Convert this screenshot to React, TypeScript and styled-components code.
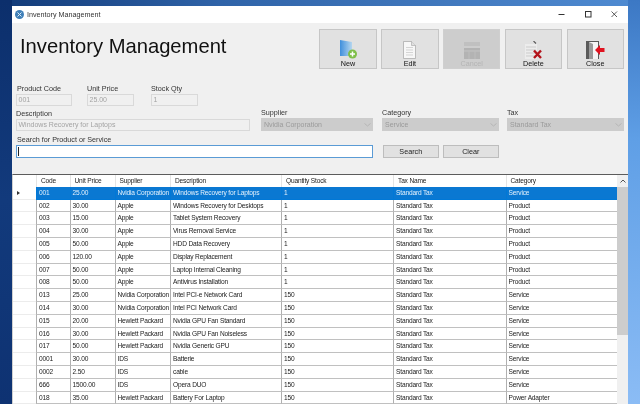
import React from "react";
import styled, { createGlobalStyle } from "styled-components";

const Global = createGlobalStyle`
  html, body { margin: 0; padding: 0; width: 640px; height: 404px; overflow: hidden; }
  body { font-family: "Liberation Sans", Arial, sans-serif; color: #1a1a1a; }
`;

const Desktop = styled.div`
  width: 640px; height: 404px; overflow: hidden; padding: 6px 12px 0; box-sizing: border-box;
  background:
    linear-gradient(180deg, #0c2f6c 0, #123a7c 200px, #0e3272 404px) 0 0 / 12px 100% no-repeat,
    linear-gradient(180deg, #3c78c4 0, #5f9fe6 140px, #8bbcf5 404px) 100% 0 / 12px 100% no-repeat,
    linear-gradient(90deg, #123a78 0, #2f63a8 220px, #3f76bb 420px, #4f8bd2 640px);
  filter: blur(0.42px);
`;
const Win = styled.div`
  height: 398px; background: #f0f0f0; display: flex; flex-direction: column; overflow: hidden;
`;
const TitleBar = styled.div`
  height: 17px; flex: none; background: #fff; display: flex; align-items: center; padding: 0 0 0 3px;
  font-size: 7.2px; color: #333;
`;
const TitleText = styled.span` margin-left: 3px; flex: 1; `;
const WinCtl = styled.div`
  width: 26.5px; height: 17px; display: flex; align-items: center; justify-content: center;
`;
const Form = styled.div`
  height: 151px; flex: none; padding: 6px 4px 0 4px; box-sizing: border-box; display: flex; flex-direction: column;
`;
const Head = styled.div` display: flex; align-items: flex-start; justify-content: space-between; height: 40px; `;
const Heading = styled.h1`
  margin: 4px 0 0 4px; font-size: 20.2px; font-weight: 400; color: #111; line-height: 26px; white-space: nowrap;
`;
const Tools = styled.div` display: flex; gap: 4.3px; `;
const ToolBtn = styled.div<{ $off?: boolean }>`
  width: 57.5px; height: 40px; box-sizing: border-box; border: 1px solid ${p => p.$off ? "#cfcfcf" : "#c6c6c6"};
  background: ${p => p.$off ? "#cdcdcd" : "#e1e1e1"}; display: flex; flex-direction: column; align-items: center;
  justify-content: flex-end; padding-bottom: 0; font-size: 7.2px; line-height: 9px; color: ${p => p.$off ? "#b4b4b4" : "#111"};
`;
const Row = styled.div<{ $mt: number }>` display: flex; margin-top: ${p => p.$mt}px; align-items: flex-end; `;
const Field = styled.div<{ $w: number; $ml?: number }>`
  width: ${p => p.$w}px; margin-left: ${p => p.$ml ?? 0}px; flex: none; display: flex; flex-direction: column;
`;
const Label = styled.label<{ $in?: number }>`
  font-size: 7.2px; line-height: 9px; color: #333; padding-left: ${p => p.$in ?? 0}px; margin-bottom: 1px; white-space: nowrap;
`;
const Input = styled.div<{ $h?: number }>`
  height: ${p => p.$h ?? 12}px; box-sizing: border-box; border: 1px solid #d9d9d9; background: #f0f0f0; color: #a3a3a3;
  font-size: 7px; line-height: 10px; padding-left: 1.5px; white-space: nowrap; overflow: hidden;
`;
const Select = styled.div`
  height: 13px; box-sizing: border-box; background: #cccccc; color: #9a9a9a; font-size: 7px; line-height: 13px;
  padding: 0 2px 0 3px; display: flex; justify-content: space-between; align-items: center; white-space: nowrap;
`;
const SearchBox = styled.div`
  height: 12.5px; box-sizing: border-box; border: 1px solid #5a9bd5; background: #fff; position: relative;
  &::after { content: ""; position: absolute; left: 1px; top: 1px; width: 1px; height: 8.5px; background: #222; }
`;
const PushBtn = styled.div<{ $ml: number }>`
  width: 55.5px; height: 13px; margin-left: ${p => p.$ml}px; box-sizing: border-box; border: 1px solid #bdbdbd; background: #e1e1e1;
  text-align: center; font-size: 7.2px; line-height: 11px; color: #222; flex: none;
`;
const Grid = styled.div`
  flex: 1; min-height: 0; border-top: 1px solid #5c5c5c; border-left: 1px solid #d0d0d0; background: #f0f0f0; display: flex; overflow: hidden;
`;
const Rows = styled.div` width: 604px; flex: none; background: #fff; `;
const Cols = "23px 33.5px 45px 55.5px 111px 112px 112.5px 111.5px";
const HeadRow = styled.div`
  display: grid; grid-template-columns: ${Cols}; height: 11.8px; font-size: 6.6px; letter-spacing: -0.17px; line-height: 12.4px; background: #fff; color: #222;
`;
const HeadCell = styled.div`
  padding-left: 4px; border-left: 1px solid #e4e4e4; white-space: nowrap; overflow: hidden; box-sizing: border-box;
  &:first-child { border-left: 0; }
`;
const DataRow = styled.div<{ $sel?: boolean }>`
  display: grid; grid-template-columns: ${Cols}; height: 12.8px; box-sizing: border-box; font-size: 6.6px; letter-spacing: -0.17px; line-height: 12px;
  color: ${p => p.$sel ? "#e4f1fc" : "#222"};
`;
const Marker = styled.div`
  border-bottom: 1px solid #ececec; background: #fff; position: relative; color: #333;
`;
const Arrow = styled.span`
  position: absolute; left: 4px; top: 4px; width: 0; height: 0;
  border-left: 3px solid #333; border-top: 2.5px solid transparent; border-bottom: 2.5px solid transparent;
`;
const Cell = styled.div<{ $sel?: boolean }>`
  padding-left: 2px; box-sizing: border-box; white-space: nowrap; overflow: hidden;
  border-left: 1px solid ${p => p.$sel ? "#0078d7" : "#b0b0b0"};
  border-bottom: 1px solid ${p => p.$sel ? "#0078d7" : "#c0c0c0"};
  background: ${p => p.$sel ? "#0a78d2" : "#fff"};
`;
const Scroll = styled.div`
  width: 11px; flex: none; background: #f0f0f0; display: flex; flex-direction: column;
`;
const ScrollUp = styled.div` height: 12px; display: flex; align-items: center; justify-content: center; `;
const Thumb = styled.div` height: 148px; background: #cdcdcd; `;

const data = [
  ["001","25.00","Nvidia Corporation","Windows Recovery for Laptops","1","Standard Tax","Service"],
  ["002","30.00","Apple","Windows Recovery for Desktops","1","Standard Tax","Product"],
  ["003","15.00","Apple","Tablet System Recovery","1","Standard Tax","Product"],
  ["004","30.00","Apple","Virus Removal Service","1","Standard Tax","Product"],
  ["005","50.00","Apple","HDD Data Recovery","1","Standard Tax","Product"],
  ["006","120.00","Apple","Display Replacement","1","Standard Tax","Product"],
  ["007","50.00","Apple","Laptop Internal Cleaning","1","Standard Tax","Product"],
  ["008","50.00","Apple","Antivirus Installation","1","Standard Tax","Product"],
  ["013","25.00","Nvidia Corporation","Intel PCI-e Network Card","150","Standard Tax","Service"],
  ["014","30.00","Nvidia Corporation","Intel PCI Network Card","150","Standard Tax","Service"],
  ["015","20.00","Hewlett Packard","Nvidia GPU Fan Standard","150","Standard Tax","Service"],
  ["016","30.00","Hewlett Packard","Nvidia GPU Fan Noiseless","150","Standard Tax","Service"],
  ["017","50.00","Hewlett Packard","Nvidia Generic GPU","150","Standard Tax","Service"],
  ["0001","30.00","IDS","Batterie","150","Standard Tax","Service"],
  ["0002","2.50","IDS","cable","150","Standard Tax","Service"],
  ["666","1500.00","IDS","Opera DUO","150","Standard Tax","Service"],
  ["018","35.00","Hewlett Packard","Battery For Laptop","150","Standard Tax","Power Adapter"],
];
const heads = ["", "Code", "Unit Price", "Supplier", "Description", "Quantity Stock", "Tax Name", "Category"];

const Chev = () => (
  <svg width="7" height="4" viewBox="0 0 7 4"><path d="M.5.5 3.5 3 6.5.5" fill="none" stroke="#b0b0b0" strokeWidth=".8" /></svg>
);
const NewIcon = () => (
  <svg width="17" height="19" viewBox="0 0 17 19">
    <defs><linearGradient id="nb" x1="0" y1="0" x2="1" y2="0"><stop offset="0" stopColor="#3f8fdc" /><stop offset="1" stopColor="#b5d6ef" /></linearGradient></defs>
    <path d="M0 0l12 2v14H0z" fill="url(#nb)" />
    <circle cx="12.5" cy="14" r="4.5" fill="#7fbf4a" />
    <path d="M12.5 11.5v5M10 14h5" stroke="#fff" strokeWidth="1.5" />
  </svg>
);
const EditIcon = () => (
  <svg width="13" height="18" viewBox="0 0 13 18">
    <path d="M.5.5h8l4 4v13H.5z" fill="#f7f7f7" stroke="#a5a5a5" strokeWidth=".7" />
    <path d="M8.5.5v4h4" fill="#e0e0e0" stroke="#a5a5a5" strokeWidth=".6" />
    <path d="M3 6.5h7M3 9h7M3 11.5h7M3 14h7" stroke="#c4c4c4" strokeWidth=".7" />
  </svg>
);
const CancelIcon = () => (
  <svg width="16" height="17" viewBox="0 0 16 17">
    <path d="M0 0h16v4H0z" fill="#c0c0c0" /><path d="M0 6h16v11H0z" fill="#b3b3b3" />
    <path d="M0 9h16" stroke="#c4c4c4" /><path d="M5 9v8M11 9v8" stroke="#bdbdbd" />
  </svg>
);
const DeleteIcon = () => (
  <svg width="17" height="18" viewBox="0 0 17 18">
    <path d="M0 3h12v15H0z" fill="#ececec" />
    <path d="M1 6h10M1 9h10M1 12h10M1 15h10" stroke="#cbcbcb" />
    <path d="M8.5 0l2.5 2.5" stroke="#555" strokeWidth="1.1" />
    <path d="M9 9.5l7 7.5M16 9.5L9 17" stroke="#b3131b" strokeWidth="2.4" />
  </svg>
);
const CloseIcon = () => (
  <svg width="19" height="18" viewBox="0 0 19 18">
    <path d="M0 0h13v18H0z" fill="#5a5a5a" />
    <path d="M3 1h9v17H3z" fill="#f4f4f4" />
    <path d="M3 1l4 2v15H3z" fill="#9a9a9a" />
    <path d="M9 9l5-5v3h4.500v4H14v3z" fill="#e0121f" />
  </svg>
);

export default function App() {
  return (
    <>
      <Global />
      <Desktop>
        <Win>
          <TitleBar>
            <svg width="9" height="9" viewBox="0 0 9 9">
              <circle cx="4.5" cy="4.5" r="4.5" fill="#3f7fb8" />
              <path d="M2.5 2.5l4 4M6.500 2.500l-4 4" stroke="#dcecf8" strokeWidth="1" />
            </svg>
            <TitleText>Inventory Management</TitleText>
            <WinCtl><svg width="7" height="7" viewBox="0 0 7 7"><path d="M.5 3.500h6" stroke="#333" /></svg></WinCtl>
            <WinCtl><svg width="7" height="7" viewBox="0 0 7 7"><rect x=".5" y=".5" width="5.500" height="5.500" fill="none" stroke="#333" /></svg></WinCtl>
            <WinCtl><svg width="7" height="7" viewBox="0 0 7 7"><path d="M.5.5l5.500 5.500M6 .5L.5 6" stroke="#333" strokeWidth=".8" /></svg></WinCtl>
          </TitleBar>
          <Form>
            <Head>
              <Heading>Inventory Management</Heading>
              <Tools>
                <ToolBtn><NewIcon />New</ToolBtn>
                <ToolBtn><EditIcon />Edit</ToolBtn>
                <ToolBtn $off><CancelIcon />Cancel</ToolBtn>
                <ToolBtn><DeleteIcon />Delete</ToolBtn>
                <ToolBtn><CloseIcon />Close</ToolBtn>
              </Tools>
            </Head>
            <Row $mt={15}>
              <Field $w={56}><Label $in={1}>Product Code</Label><Input>001</Input></Field>
              <Field $w={47} $ml={15}><Label>Unit Price</Label><Input>25.00</Input></Field>
              <Field $w={47} $ml={17}><Label>Stock Qty</Label><Input>1</Input></Field>
            </Row>
            <Row $mt={2}>
              <Field $w={234}><Label>Description</Label><Input>Windows Recovery for Laptops</Input></Field>
              <Field $w={112} $ml={11}><Label>Supplier</Label><Select>Nvidia Corporation<Chev /></Select></Field>
              <Field $w={117} $ml={9}><Label>Category</Label><Select>Service<Chev /></Select></Field>
              <Field $w={117} $ml={8}><Label>Tax</Label><Select>Standard Tax<Chev /></Select></Field>
            </Row>
            <Row $mt={4}>
              <Field $w={357}><Label $in={1}>Search for Product or Service</Label><SearchBox /></Field>
              <PushBtn $ml={10}>Search</PushBtn>
              <PushBtn $ml={4.5}>Clear</PushBtn>
            </Row>
          </Form>
          <Grid>
            <Rows>
              <HeadRow>{heads.map((h, i) => <HeadCell key={i}>{h}</HeadCell>)}</HeadRow>
              {data.map((r, i) => (
                <DataRow key={r[0]} $sel={i === 0}>
                  <Marker>{i === 0 && <Arrow />}</Marker>
                  {r.map((c, j) => <Cell key={j} $sel={i === 0}>{c}</Cell>)}
                </DataRow>
              ))}
            </Rows>
            <Scroll>
              <ScrollUp><svg width="6" height="4" viewBox="0 0 6 4"><path d="M.5 3.500 3 1l2.500 2.500" fill="none" stroke="#555" /></svg></ScrollUp>
              <Thumb />
            </Scroll>
          </Grid>
        </Win>
      </Desktop>
    </>
  );
}
